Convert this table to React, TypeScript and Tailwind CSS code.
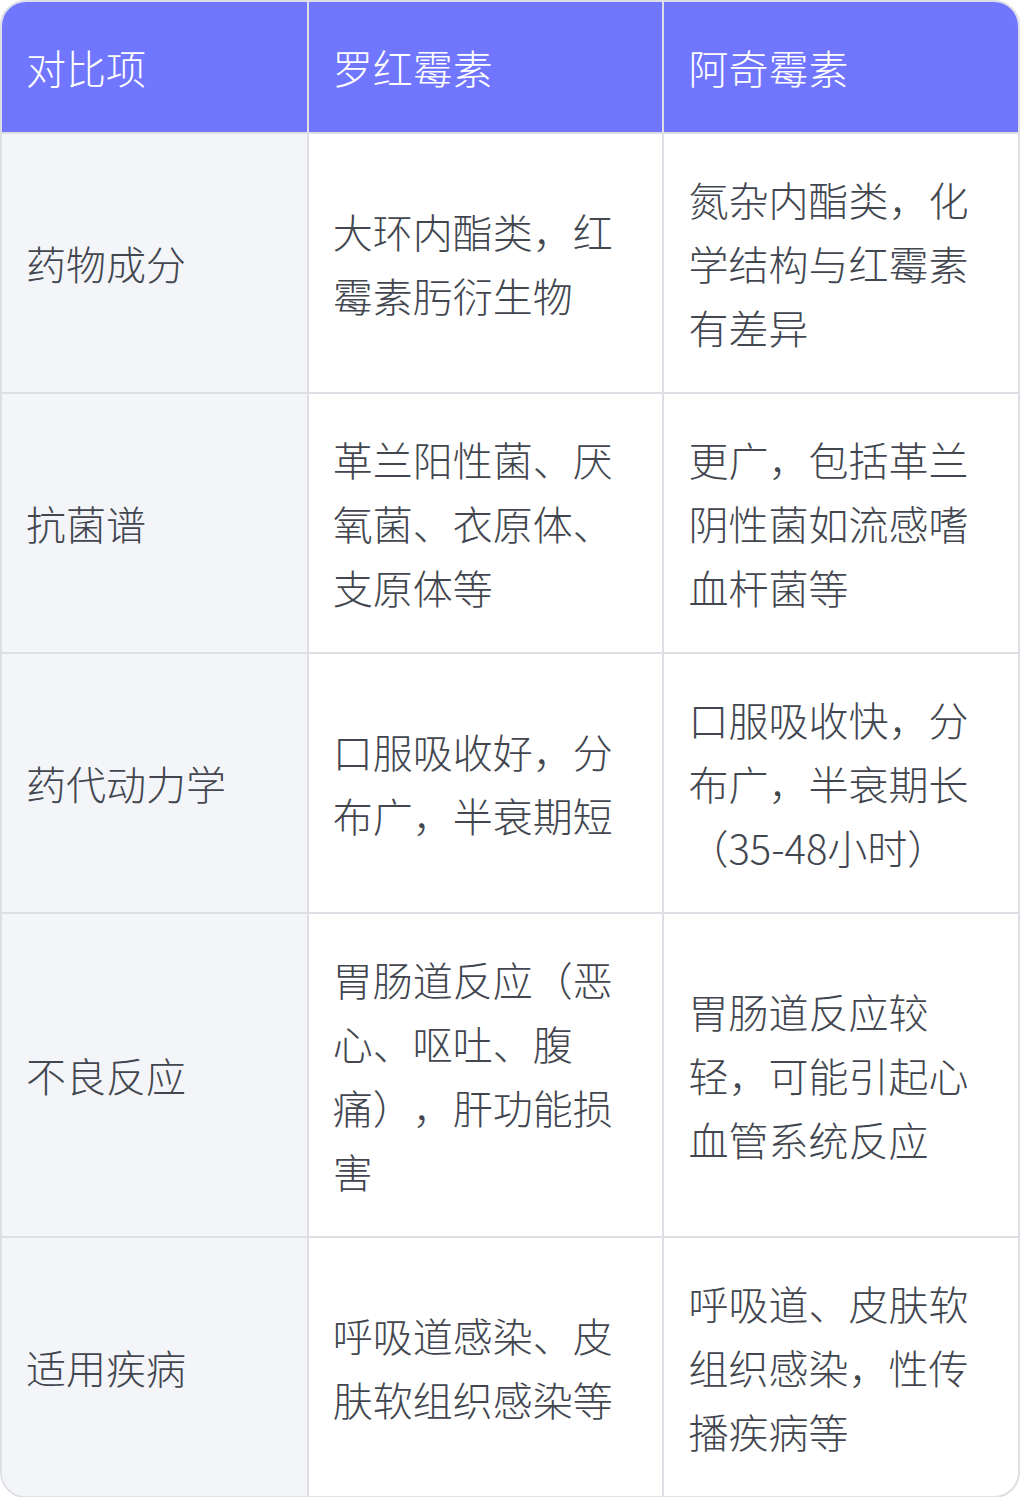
const HEAD = ["对比项", "罗红霉素", "阿奇霉素"];

const ROWS: [string, string, string][] = [
  ["药物成分", "大环内酯类，红霉素肟衍生物", "氮杂内酯类，化学结构与红霉素有差异"],
  ["抗菌谱", "革兰阳性菌、厌氧菌、衣原体、支原体等", "更广，包括革兰阴性菌如流感嗜血杆菌等"],
  ["药代动力学", "口服吸收好，分布广，半衰期短", "口服吸收快，分布广，半衰期长（35-48小时）"],
  ["不良反应", "胃肠道反应（恶心、呕吐、腹痛），肝功能损害", "胃肠道反应较轻，可能引起心血管系统反应"],
  ["适用疾病", "呼吸道感染、皮肤软组织感染等", "呼吸道、皮肤软组织感染，性传播疾病等"],
];

export default function App() {
  return (
    <div className="w-[1020px] bg-white font-['Noto_Sans_CJK_SC','Noto_Sans',sans-serif] font-light text-[40px] leading-[64px] [text-spacing-trim:space-all]">
      <div className="overflow-hidden rounded-[26px] border-2 border-[#dedfe5]">
        <div className="grid grid-cols-[30%_35%_35%] bg-[#7176ff] text-white">
          {HEAD.map((h, i) => (
            <div key={h} className={`px-6 py-[33px] ${i > 0 ? "border-l-2 border-[#dedfe5]" : ""}`}>
              {h}
            </div>
          ))}
        </div>
        {ROWS.map((r) => (
          <div key={r[0]} className="grid grid-cols-[30%_35%_35%] border-t-2 border-[#dedfe5] text-[#42464f]">
            <div className="flex items-center bg-[#f4f5f9] px-6 py-[33px]">{r[0]}</div>
            <div className="flex items-center border-l-2 border-[#dedfe5] px-6 py-[33px]">{r[1]}</div>
            <div className="flex items-center border-l-2 border-[#dedfe5] px-6 py-[33px]">{r[2]}</div>
          </div>
        ))}
      </div>
    </div>
  );
}
